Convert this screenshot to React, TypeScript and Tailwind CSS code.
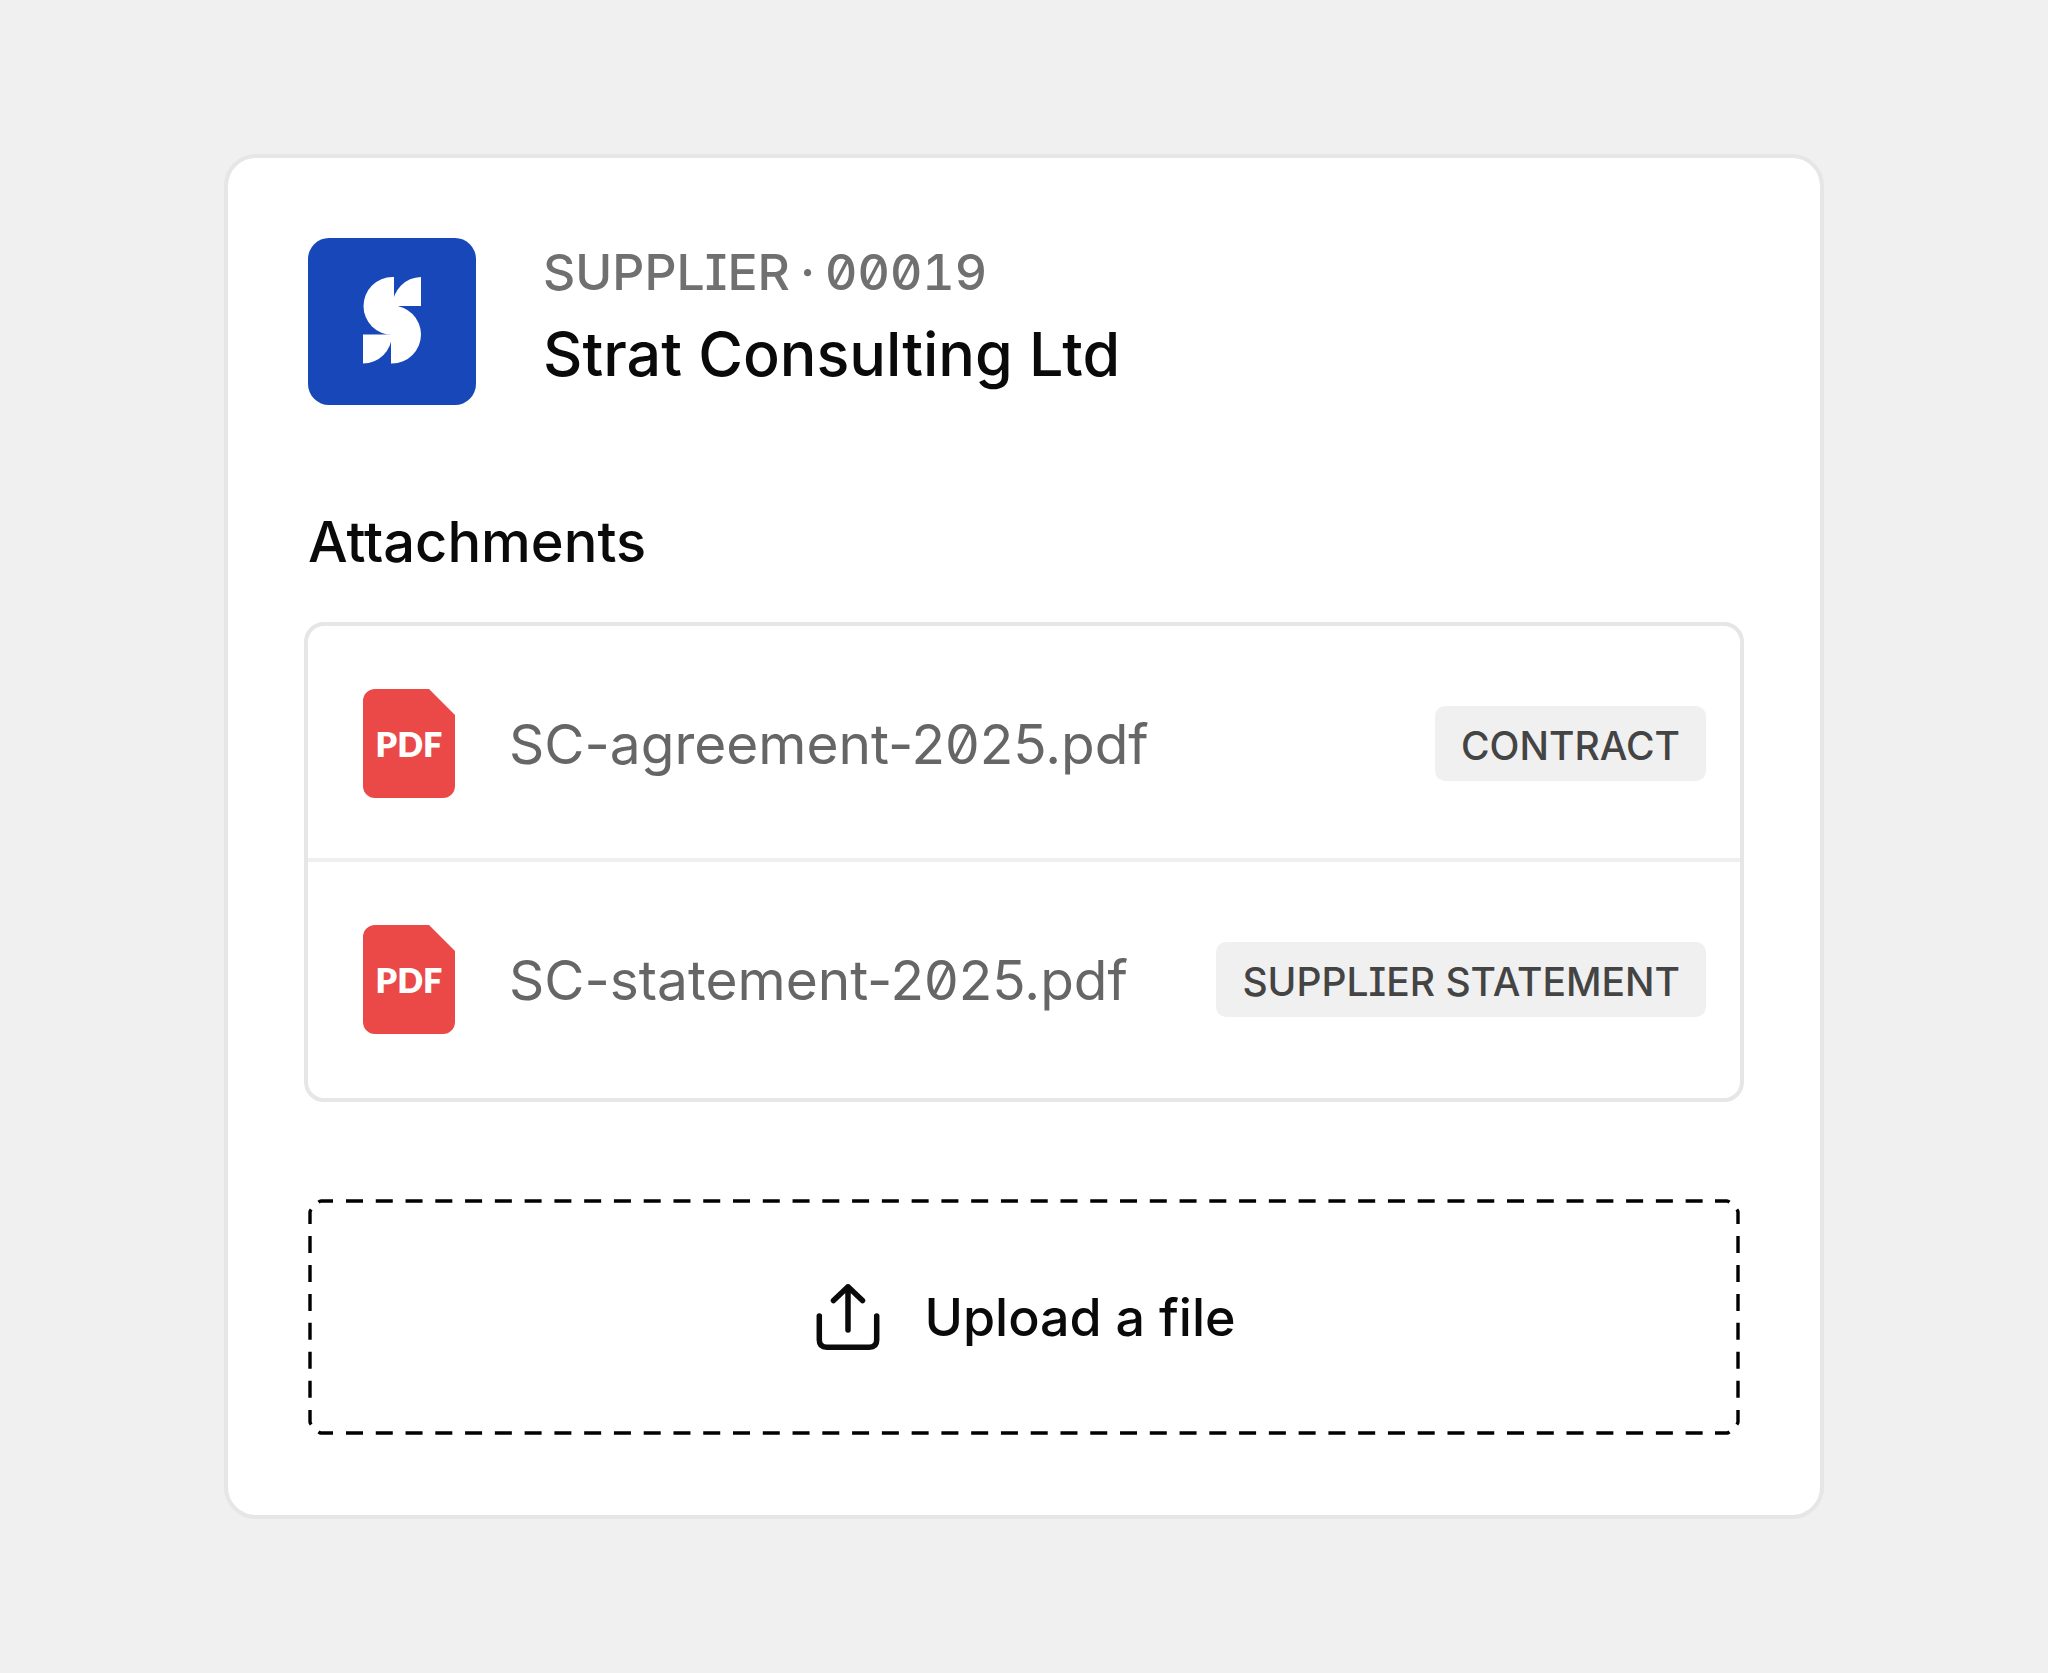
type Attachment = { name: string; tag: string };

const attachments: Attachment[] = [
  { name: "SC-agreement-2025.pdf", tag: "CONTRACT" },
  { name: "SC-statement-2025.pdf", tag: "SUPPLIER STATEMENT" },
];

function StratLogo() {
  return (
    <svg viewBox="0 0 168 168" className="size-[168px] shrink-0" role="img" aria-label="Strat">
      <rect width="168" height="167" rx="21" fill="#1847ba" />
      <g fill="#fff">
        <path d="M84.5 39A29 29 0 0 0 84.5 97H86V39Z" />
        <path d="M113 39V68H84.5A29 29 0 0 1 113 39Z" />
        <path d="M84 67.5A29 29 0 0 1 84 125.5H83V67.5Z" />
        <path d="M55 96.5H84A29 29 0 0 1 55 125.5Z" />
      </g>
    </svg>
  );
}

function PdfIcon() {
  return (
    <svg viewBox="0 0 92 109" className="h-[109px] w-[92px] shrink-0" aria-hidden="true">
      <path
        d="M12 0H66L92 26V97A12 12 0 0 1 80 109H12A12 12 0 0 1 0 97V12A12 12 0 0 1 12 0Z"
        fill="#ea4947"
      />
      <text
        x="46"
        y="68"
        textAnchor="middle"
        fill="#fff"
        className="font-['Lato',sans-serif] text-[34px] font-extrabold"
      >
        PDF
      </text>
    </svg>
  );
}

function UploadIcon() {
  return (
    <svg
      viewBox="0 0 64 68"
      className="h-[68px] w-[64px] shrink-0"
      fill="none"
      stroke="currentColor"
      strokeWidth="5.5"
      strokeLinecap="round"
      strokeLinejoin="round"
      aria-hidden="true"
    >
      <path d="M3.3 33V57Q3.3 64.2 10.8 64.2H53.2Q60.7 64.2 60.7 57V33" />
      <path d="M32 47V3.8M17.5 17.5L32 3.8L46.5 17.5" />
    </svg>
  );
}

function Corner() {
  return <path d="M25 2H13Q12 2 10.5 3.2M2 25V13Q2 12 3.2 10.5" />;
}

function DashedOutline() {
  return (
    <svg
      className="pointer-events-none absolute inset-0 h-full w-full"
      fill="none"
      stroke="#000"
      strokeWidth="3.4"
      aria-hidden="true"
    >
      <line x1="38" y1="2" x2="98%" y2="2" strokeDasharray="17 12.77" />
      <svg y="100%" overflow="visible">
        <line x1="38" y1="-2" x2="98%" y2="-2" strokeDasharray="17 12.77" />
      </svg>
      <line x1="2" y1="37" x2="2" y2="89%" strokeDasharray="17 11.95" />
      <svg x="100%" overflow="visible">
        <line x1="-2" y1="37" x2="-2" y2="89%" strokeDasharray="17 11.95" />
      </svg>
      <Corner />
      <svg x="100%" overflow="visible">
        <g transform="scale(-1 1)">
          <Corner />
        </g>
      </svg>
      <svg y="100%" overflow="visible">
        <g transform="scale(1 -1)">
          <Corner />
        </g>
      </svg>
      <svg x="100%" y="100%" overflow="visible">
        <g transform="scale(-1 -1)">
          <Corner />
        </g>
      </svg>
    </svg>
  );
}

export default function App() {
  return (
    <div className="min-h-screen bg-[#f0f0f0] px-6 py-[154px] font-['Inter',sans-serif] text-[#0a0a0a]">
      <main className="mx-auto w-full max-w-[1600px] rounded-[32px] border-4 border-[#e6e6e6] bg-white p-20">
        <header className="flex items-start gap-[67px]">
          <StratLogo />
          <div className="flex min-w-0 flex-col gap-2">
            <p className="text-[50px] leading-[68px] font-medium text-[#707070] tabular-nums slashed-zero [font-feature-settings:'ss02']">
              SUPPLIER<span className="px-[10px]">·</span>00019
            </p>
            <h1 className="text-[61px] leading-[80px] font-medium">Strat Consulting Ltd</h1>
          </div>
        </header>

        <h2 className="mt-[104px] text-[56px] leading-[64px] font-medium">Attachments</h2>

        <ul className="-mx-1 mt-12 rounded-[20px] border-4 border-[#e6e6e6]">
          {attachments.map((file) => (
            <li
              key={file.name}
              className="flex items-center border-b-4 border-[#efefef] pt-[63px] pr-[34px] pb-[60px] pl-[55px] last:border-transparent"
            >
              <PdfIcon />
              <span className="ml-[54px] text-[55px] leading-[64px] text-[#666] slashed-zero">{file.name}</span>
              <span className="ml-auto rounded-[10px] bg-[#f0f0f0] px-[26px] pt-1 text-[39px] leading-[71px] font-medium text-[#444] [font-feature-settings:'ss02']">
                {file.tag}
              </span>
            </li>
          ))}
        </ul>

        <button
          type="button"
          className="relative mt-[97px] flex h-[236px] w-full cursor-pointer items-center justify-center gap-[44px] pl-1"
        >
          <DashedOutline />
          <UploadIcon />
          <span className="pt-[2px] text-[52px] leading-[64px] font-medium">Upload a file</span>
        </button>
      </main>
    </div>
  );
}
